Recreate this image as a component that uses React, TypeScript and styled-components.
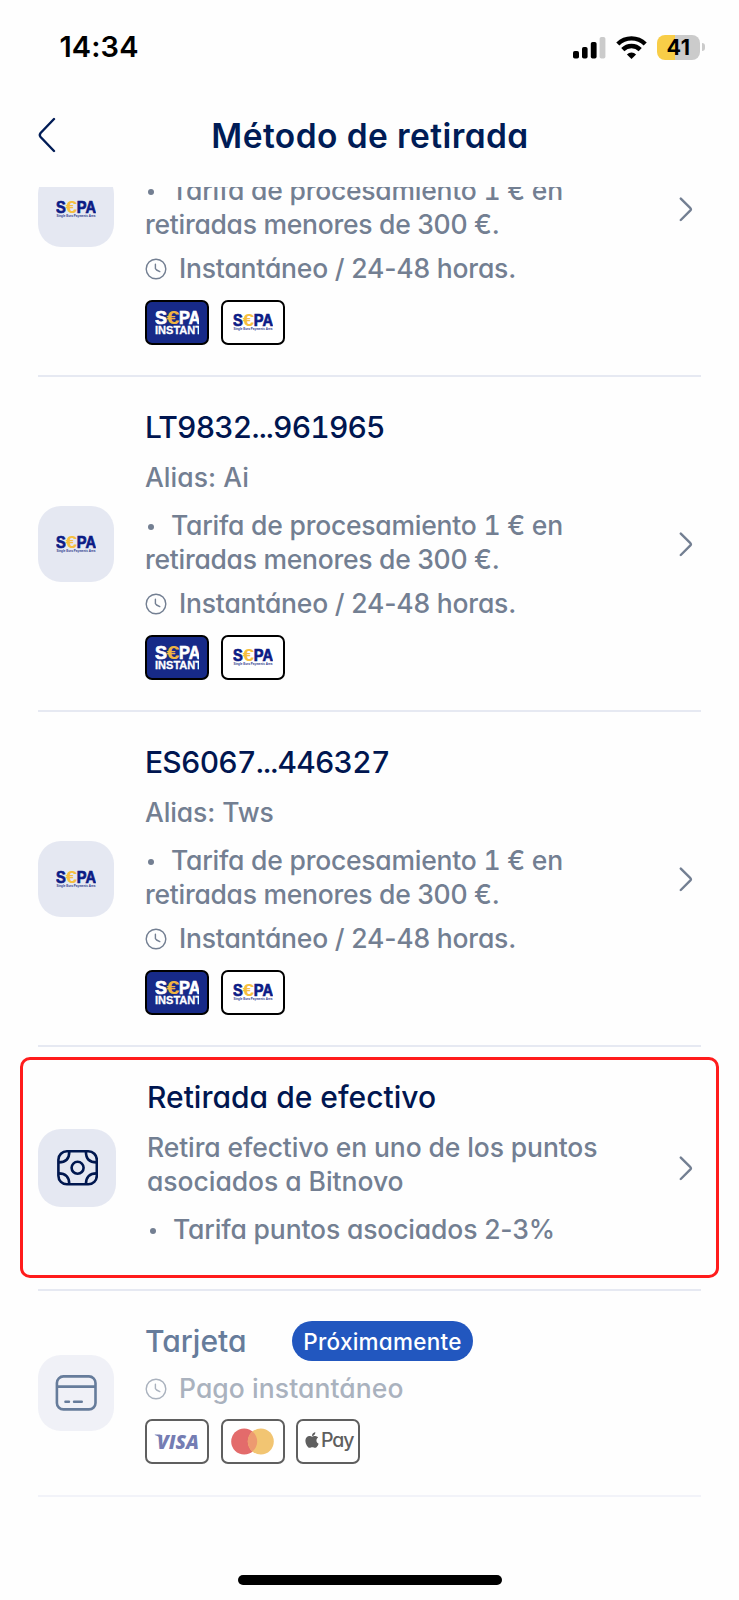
import React from 'react';
import styled, { createGlobalStyle } from 'styled-components';
import { FaApple } from 'react-icons/fa';

const GlobalStyle = createGlobalStyle`
  body { margin: 0; background: #fff; }
  * { box-sizing: border-box; }
`;

const Screen = styled.div`
  position: relative;
  display: flex;
  flex-direction: column;
  width: 739px;
  height: 1600px;
  overflow: hidden;
  background: #fefefe;
  font-family: Inter, 'Liberation Sans', sans-serif;
  font-feature-settings: 'cv11' 1;
`;

const StatusBar = styled.div`
  display: flex;
  align-items: center;
  justify-content: space-between;
  height: 94px;
  padding: 0 34px 0 59.5px;
`;

const Clock = styled.span<{ $track: number }>`
  font-size: 29px;
  font-weight: 600;
  line-height: 34px;
  letter-spacing: ${(p) => p.$track}px;
  color: #000;
`;

const StatusIcons = styled.div`
  display: flex;
  align-items: center;
  gap: 10px;
`;

const Battery = styled.div`
  display: flex;
  align-items: center;
  gap: 2px;
`;

const BatteryBody = styled.div`
  display: flex;
  align-items: center;
  justify-content: center;
  width: 43px;
  height: 25px;
  border-radius: 8px;
  background: linear-gradient(90deg, #f8cd47 0 18px, #cbcbcb 18px);
  font-size: 21.5px;
  font-weight: 700;
  line-height: 25px;
  letter-spacing: 0.5px;
  color: #000;
`;

const BatteryNub = styled.div`
  width: 3px;
  height: 8px;
  border-radius: 0 4px 4px 0;
  background: #cbcbcb;
`;

const Header = styled.header`
  display: grid;
  grid-template-columns: 60px 1fr 60px;
  align-items: center;
  height: 93px;
  padding: 0 38px;
`;

const HeaderTitle = styled.h1<{ $track: number }>`
  margin: 0;
  padding: 0 0 10px 1px;
  text-align: center;
  white-space: nowrap;
  font-size: 33.5px;
  font-weight: 640;
  line-height: 40px;
  letter-spacing: ${(p) => p.$track}px;
  color: #001c56;
`;

const BackIcon = styled.svg`
  display: block;
  margin-bottom: 12px;
`;

const List = styled.main`
  flex: 1;
  overflow: hidden;
  padding: 0 38px;
`;

const Scrolled = styled.div`
  margin-top: -145px;
`;

const Row = styled.section<{ $height: number; $faint?: boolean }>`
  position: relative;
  display: flex;
  align-items: center;
  height: ${(p) => p.$height}px;
  border-bottom: 2px solid ${(p) => (p.$faint ? '#f2f3f9' : '#e6e9f2')};
`;

const Tile = styled.div<{ $size: number; $faint?: boolean }>`
  display: flex;
  align-items: center;
  justify-content: center;
  flex: none;
  width: ${(p) => p.$size}px;
  height: ${(p) => p.$size}px;
  border-radius: 23px;
  background: ${(p) => (p.$faint ? '#f0f1f7' : '#e5e8f2')};
`;

const Body = styled.div<{ $indent: number }>`
  flex: 1;
  align-self: stretch;
  padding: 31px 0 0 ${(p) => p.$indent}px;
`;

const TitleLine = styled.div`
  display: flex;
  align-items: center;
  height: 38px;
`;

const Title = styled.h2<{ $track: number; $muted?: boolean }>`
  margin: 0;
  white-space: nowrap;
  font-size: 30px;
  font-weight: 500;
  font-variant-numeric: tabular-nums;
  line-height: 38px;
  letter-spacing: ${(p) => p.$track}px;
  color: ${(p) => (p.$muted ? '#667c9b' : '#001650')};
`;

const Text = styled.div<{ $top: number; $track: number; $faint?: boolean; $tabular?: boolean }>`
  display: flex;
  align-items: center;
  margin-top: ${(p) => p.$top}px;
  white-space: nowrap;
  font-size: 26.5px;
  font-weight: 450;
  font-variant-numeric: ${(p) => (p.$tabular ? 'tabular-nums' : 'normal')};
  line-height: 33.6px;
  letter-spacing: ${(p) => p.$track}px;
  color: ${(p) => (p.$faint ? '#aab2be' : '#737f92')};
`;

const Dot = styled.span`
  flex: none;
  width: 6px;
  height: 6px;
  margin: 3px 17px 0 3px;
  border-radius: 50%;
  background: currentColor;
`;

const ClockIcon = styled.svg`
  flex: none;
  margin-right: 12px;
`;

const Badges = styled.div<{ $top: number }>`
  display: flex;
  gap: 11.4px;
  margin-top: ${(p) => p.$top}px;
`;

const Badge = styled.div<{ $tone: 'navy' | 'white' | 'faint' }>`
  display: flex;
  align-items: center;
  justify-content: center;
  width: 64.2px;
  height: 45px;
  border: 2px solid ${(p) => (p.$tone === 'faint' ? '#5f5f5f' : '#000')};
  border-radius: 7px;
  background: ${(p) => (p.$tone === 'navy' ? '#172a88' : '#fff')};
  overflow: hidden;
`;

const Pill = styled.span<{ $track: number }>`
  display: flex;
  align-items: center;
  justify-content: center;
  width: 181px;
  height: 40px;
  margin-left: auto;
  border-radius: 20px;
  background: #2257bf;
  color: #fff;
  font-size: 22.5px;
  font-weight: 500;
  letter-spacing: ${(p) => p.$track}px;
`;

const CardHeading = styled(TitleLine)`
  width: 328px;
`;

const Highlight = styled.div`
  position: absolute;
  inset: 10px -18px 11px -18px;
  border: 3px solid #ff1c1c;
  border-radius: 10px;
`;

const NextIcon = styled.svg`
  flex: none;
  margin-right: 8px;
`;

const HomeIndicator = styled.div`
  flex: none;
  align-self: center;
  width: 264px;
  height: 10px;
  margin-bottom: 15px;
  border-radius: 5px;
  background: #000;
`;

const Next = () => (
  <NextIcon width="14" height="26" viewBox="0 0 14 26" fill="none" stroke="#737f92" strokeWidth="2.4" strokeLinecap="round" strokeLinejoin="round">
    <path d="M1.8 2.6 L11.4 12.2 Q12.4 13.3 11.4 14.4 L1.8 24" />
  </NextIcon>
);

const Time = ({ color = '#737f92' }: { color?: string }) => (
  <ClockIcon width="22" height="22" viewBox="0 0 22 22" fill="none" stroke={color} strokeWidth="1.4" strokeLinecap="round" strokeLinejoin="round">
    <circle cx="11" cy="11" r="9.8" />
    <path d="M10.4 6.2 V10.6 L11.6 12 L14.8 13.6" />
  </ClockIcon>
);

const logoFont = "'Liberation Sans', Inter, sans-serif";

const SepaLogo = () => (
  <svg width="40" height="18" viewBox="0 0 40 18" fontFamily={logoFont}>
    <g fontSize="16.2" fontWeight="700" fill="#0b1b85" stroke="#0b1b85" strokeWidth="0.7">
      <text x="0" y="13.3" textLength="9.8" lengthAdjust="spacingAndGlyphs">S</text>
      <text x="9.8" y="13.3" fill="#f6bf3f" stroke="none" textLength="11.4" lengthAdjust="spacingAndGlyphs">€</text>
      <text x="20.8" y="13.3" textLength="19.2" lengthAdjust="spacingAndGlyphs">PA</text>
    </g>
    <text x="0.4" y="16.9" fontSize="3.3" fontWeight="700" fill="#2b3a8c" textLength="39" lengthAdjust="spacingAndGlyphs">Single Euro Payments Area</text>
  </svg>
);

const SepaInstantLogo = () => (
  <svg width="44.5" height="25" viewBox="0 0 44.5 25" fontFamily={logoFont}>
    <g fontSize="18" fontWeight="700" fill="#fff" stroke="#fff" strokeWidth="0.7">
      <text x="0" y="13.6" textLength="12" lengthAdjust="spacingAndGlyphs">S</text>
      <text x="11.6" y="13.6" fill="#efb441" stroke="none" textLength="13" lengthAdjust="spacingAndGlyphs">€</text>
      <text x="24" y="13.6" textLength="21.4" lengthAdjust="spacingAndGlyphs">PA</text>
    </g>
    <text x="0" y="24.3" fontSize="11.2" fontWeight="700" fill="#fff" stroke="#fff" strokeWidth="0.3" textLength="47" lengthAdjust="spacingAndGlyphs">INSTANT</text>
  </svg>
);

const CashIcon = () => (
  <svg width="42" height="36" viewBox="-1 0 42 36" fill="none" stroke="#00174f" strokeWidth="2.6">
    <rect x="1.4" y="1.3" width="38.4" height="33" rx="8.5" />
    <circle cx="20.6" cy="17.8" r="6" />
    <path d="M12.3 1.4 Q12.3 12.4 1.6 12.4 M28.9 1.4 Q28.9 12.4 39.6 12.4 M12.3 34.2 Q12.3 23.4 1.6 23.4 M28.9 34.2 Q28.9 23.4 39.6 23.4" />
  </svg>
);

const CardIcon = () => (
  <svg width="42" height="36" viewBox="-0.4 0 42 36" fill="none" stroke="#667c9b" strokeWidth="2.6" strokeLinecap="round">
    <rect x="1.5" y="1.4" width="38.6" height="33" rx="6.5" />
    <path d="M1.5 11.6 H40" strokeLinecap="butt" />
    <path d="M10 26.8 H13.6 M18.6 26.8 H26.4" strokeWidth="2.4" />
  </svg>
);

const VisaLogo = () => (
  <svg width="46" height="18" viewBox="0 0 46 18" fontFamily="'Open Sans', sans-serif">
    <path d="M0.8 2.6 H6.4 L8.4 9 Q6.4 4.6 0.8 3 Z" fill="#757db3" />
    <text x="3" y="17.2" fontSize="20.2" fontWeight="800" fontStyle="italic" fill="#757db3" textLength="42" lengthAdjust="spacingAndGlyphs">VISA</text>
  </svg>
);

const MastercardLogo = () => (
  <svg width="43" height="27" viewBox="0 0 43 27">
    <circle cx="13.2" cy="13.5" r="13" fill="#e36b6b" />
    <circle cx="29.8" cy="13.5" r="13" fill="#f2c572" />
    <path d="M21.5 3.5 A13 13 0 0 1 21.5 23.5 A13 13 0 0 1 21.5 3.5 Z" fill="#ed9a70" />
  </svg>
);

const ApplePayMark = styled.div`
  display: flex;
  align-items: center;
  padding-bottom: 3px;
  color: #5f5f5f;
  font-size: 19.5px;
  line-height: 24px;
  font-weight: 450;
  letter-spacing: -1.1px;
`;

const SignalIcon = () => (
  <svg width="33" height="23" viewBox="0 0 33 23">
    <rect x="0" y="15" width="6" height="7.5" rx="1.8" />
    <rect x="9" y="11" width="5.6" height="11.5" rx="1.8" />
    <rect x="17.8" y="6" width="5.8" height="16.5" rx="1.8" />
    <rect x="26.6" y="1" width="5.8" height="21.5" rx="1.8" fill="#cbcbcb" />
  </svg>
);

const WifiIcon = () => (
  <svg width="31" height="23" viewBox="0 0 31 23" fill="none" stroke="#000" strokeWidth="4.4">
    <path d="M1.8 8 A19.5 19.5 0 0 1 29.2 8" />
    <path d="M6.8 13.6 A12.2 12.2 0 0 1 24.2 13.6" />
    <path d="M15.5 23 L10.9 18.4 A6.6 6.6 0 0 1 20.1 18.4 Z" fill="#000" stroke="none" />
  </svg>
);

type Account = { title: string; titleTrack: number; alias: string; aliasTrack: number };

const accounts: Account[] = [
  { title: 'ES7921...118204', titleTrack: -0.8, alias: 'Alias: Es', aliasTrack: 0 },
  { title: 'LT9832...961965', titleTrack: -0.84, alias: 'Alias: Ai', aliasTrack: 0.05 },
  { title: 'ES6067...446327', titleTrack: -0.76, alias: 'Alias: Tws', aliasTrack: -0.1 },
];

const AccountRow = ({ title, titleTrack, alias, aliasTrack }: Account) => (
  <Row $height={335}>
    <Tile $size={76}><SepaLogo /></Tile>
    <Body $indent={31}>
      <TitleLine><Title $track={titleTrack}>{title}</Title></TitleLine>
      <Text $top={15.2} $track={aliasTrack}>{alias}</Text>
      <Text $top={14.2} $track={-0.23} $tabular><Dot />Tarifa de procesamiento 1 € en</Text>
      <Text $top={0} $track={-0.27}>retiradas menores de 300 €.</Text>
      <Text $top={10.6} $track={-0.2}><Time />Instantáneo / 24-48 horas.</Text>
      <Badges $top={14.2}>
        <Badge $tone="navy"><SepaInstantLogo /></Badge>
        <Badge $tone="white"><SepaLogo /></Badge>
      </Badges>
    </Body>
    <Next />
  </Row>
);

export default function App() {
  return (
    <Screen>
      <GlobalStyle />
      <StatusBar>
        <Clock $track={0.1}>14:34</Clock>
        <StatusIcons>
          <SignalIcon />
          <WifiIcon />
          <Battery>
            <BatteryBody>41</BatteryBody>
            <BatteryNub />
          </Battery>
        </StatusIcons>
      </StatusBar>
      <Header>
        <BackIcon width="18" height="36" viewBox="0 0 18 36" fill="none" stroke="#001c56" strokeWidth="2.4" strokeLinecap="round">
          <path d="M16 2 L2.6 16 Q1 18 2.6 20 L16 34" />
        </BackIcon>
        <HeaderTitle $track={0.42}>Método de retirada</HeaderTitle>
      </Header>
      <List>
        <Scrolled>
          {accounts.map((a) => <AccountRow key={a.title} {...a} />)}
          <Row $height={244}>
            <Tile $size={78}><CashIcon /></Tile>
            <Body $indent={31}>
              <TitleLine><Title $track={0}>Retirada de efectivo</Title></TitleLine>
              <Text $top={15} $track={-0.11}>Retira efectivo en uno de los puntos</Text>
              <Text $top={0} $track={-0.05}>asociados a Bitnovo</Text>
              <Text $top={14.5} $track={-0.15}><Dot />Tarifa puntos asociados 2-3%</Text>
            </Body>
            <Next />
            <Highlight />
          </Row>
          <Row $height={206} $faint>
            <Tile $size={76} $faint><CardIcon /></Tile>
            <Body $indent={31}>
              <CardHeading>
                <Title $track={0} $muted>Tarjeta</Title>
                <Pill $track={0.25}>Próximamente</Pill>
              </CardHeading>
              <Text $top={12} $track={0.07} $faint><Time color="#aab2be" />Pago instantáneo</Text>
              <Badges $top={13.4}>
                <Badge $tone="faint"><VisaLogo /></Badge>
                <Badge $tone="faint"><MastercardLogo /></Badge>
                <Badge $tone="faint"><ApplePayMark><FaApple size={18} />Pay</ApplePayMark></Badge>
              </Badges>
            </Body>
          </Row>
        </Scrolled>
      </List>
      <HomeIndicator />
    </Screen>
  );
}
